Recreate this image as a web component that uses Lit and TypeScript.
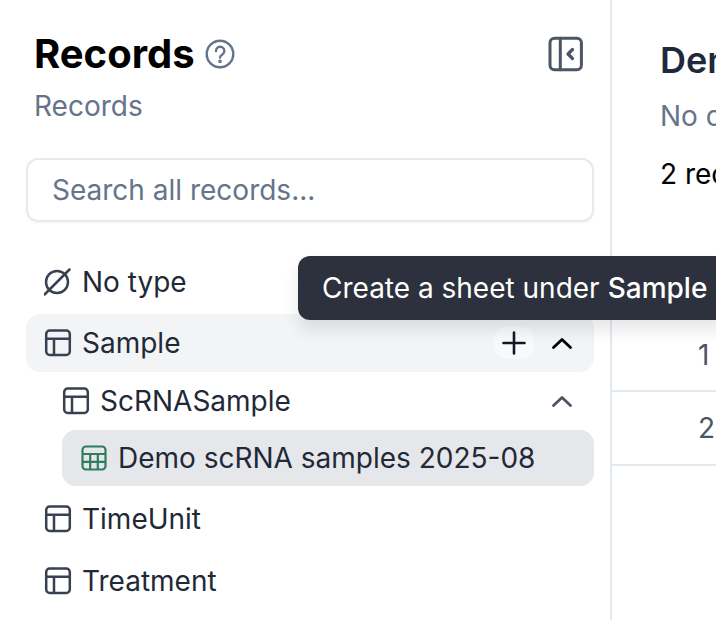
import { LitElement, html, css, svg } from "lit";
import { customElement } from "lit/decorators.js";

const tableIcon = svg`<svg class="ic" viewBox="0 0 28 28" fill="none" stroke="currentColor" stroke-width="2.5"><rect x="2.2" y="1.6" width="23.6" height="24.4" rx="3.5"/><path d="M2.2 9.8h23.6M10 9.8V26"/></svg>`;
const chevUp = (c: string) => svg`<svg class="chev ${c}" viewBox="0 0 24 24" fill="none" stroke="currentColor" stroke-width="2.8" stroke-linecap="round" stroke-linejoin="round"><path d="M3.5 16.5 12 8.5l8.5 8"/></svg>`;

@customElement("app-root")
export class AppRoot extends LitElement {
  static styles = css`
    :host { display: block; width: 716px; height: 620px; position: relative; overflow: hidden; background: #fff; font-family: Inter, "Liberation Sans", sans-serif; color: #1f2937; }
    .page { display: flex; height: 620px; }
    .side { width: 610px; flex: none; padding: 0 16px 0 26px; box-sizing: border-box; }
    .divider { width: 2px; flex: none; background: #e2e8f0; }
    .main { flex: 1; min-width: 0; overflow: hidden; white-space: nowrap; display: flex; flex-direction: column; }
    .head { display: flex; align-items: center; justify-content: space-between; padding: 32px 8px 0 8px; height: 44px; }
    .title { display: flex; align-items: center; gap: 10px; }
    h1 { margin: 0; font-size: 40px; line-height: 44px; font-weight: 700; color: #000; }
    .help { width: 30px; height: 30px; display: block; color: #64748b; }
    .collapse { width: 36px; height: 36px; display: block; color: #4b5563; margin-right: 2px; }
    .sub { margin: 14px 0 0 8px; font-size: 28px; line-height: 32px; color: #64748b; }
    .search { display: flex; align-items: center; height: 64px; box-sizing: border-box; margin-top: 36px; padding: 0 24px; border: 2px solid #e5e9f0; border-radius: 12px; box-shadow: 0 1px 2px rgba(15,23,42,.05); font-size: 28px; color: #64748b; }
    .tree { margin-top: 30px; display: flex; flex-direction: column; }
    .row { display: flex; align-items: center; gap: 10px; font-size: 28px; line-height: 36px; padding: 0 20px 0 18px; border-radius: 14px; }
    .ic { width: 28px; height: 28px; flex: none; color: #374151; }
    .label { flex: 1; white-space: nowrap; }
    .chev { width: 24px; height: 24px; flex: none; color: #4b5563; }
    .chev.dark { color: #000; }
    .none { height: 60px; margin-bottom: 2px; }
    .sample { height: 58px; background: #f3f4f6; }
    .plus { width: 40px; height: 32px; border-radius: 12px; background: #f8f9fb; display: flex; align-items: center; justify-content: center; margin-right: 6px; }
    .plus svg { width: 28px; height: 28px; color: #111827; }
    .nest { height: 58px; margin-left: 18px; }
    .sheet { height: 56px; margin-left: 36px; padding-left: 18px; background: #e5e7eb; }
    .sheet .ic { color: #2f7d5b; }
    .plain { height: 66px; }
    .plain.last { height: 58px; }
    .main h2 { margin: 38px 0 0 48px; font-size: 36px; line-height: 44px; font-weight: 600; color: #1e293b; }
    .desc { margin: 17px 0 0 48px; font-size: 28px; line-height: 34px; color: #64748b; }
    .count { margin: 25px 0 0 48px; font-size: 28px; line-height: 32px; color: #000; }
    .tbl { margin-top: 130px; }
    .tr { box-sizing: border-box; display: flex; align-items: center; padding-left: 86px; font-size: 28px; color: #4b5563; border-bottom: 2px solid #e2e8f0; }
    .tr.a { height: 72px; }
    .tr.b { height: 74px; }
    .tip { position: absolute; left: 298px; top: 256px; height: 64px; box-sizing: border-box; padding: 0 24px; display: flex; align-items: center; background: rgba(36,40,53,.96); color: #fff; border-radius: 12px; font-size: 28px; white-space: nowrap; box-shadow: 0 10px 16px rgba(15,23,42,.1); }
    .tip b { font-weight: 500; margin-left: 8px; }
  `;

  render() {
    return html`
      <div class="page">
        <aside class="side">
          <div class="head">
            <div class="title">
              <h1>Records</h1>
              <svg class="help" viewBox="0 0 30 30" fill="none" stroke="currentColor" stroke-width="2.4" stroke-linecap="round"><circle cx="15" cy="15" r="13.3"/><path d="M11 12a4.2 4.2 0 1 1 6.4 3.5c-1.4.9-2.4 1.6-2.4 3"/><circle cx="15" cy="22.3" r=".7" fill="currentColor"/></svg>
            </div>
            <svg class="collapse" viewBox="0 0 36 36" fill="none" stroke="currentColor" stroke-width="3" stroke-linecap="round" stroke-linejoin="round"><rect x="2" y="2.3" width="31.4" height="31.4" rx="4.5"/><path d="M12.3 2.3v31.4"/><path d="M24.5 13.5 20 18l4.5 4.5" stroke-width="3.2"/></svg>
          </div>
          <p class="sub">Records</p>
          <div class="search">Search all records...</div>
          <div class="tree">
            <div class="row none">
              <svg class="ic" viewBox="0 0 28 28" fill="none" stroke="currentColor" stroke-width="2.5" stroke-linecap="round"><circle cx="13" cy="14" r="11"/><path d="M.5 26.5 25.5 1.5"/></svg>
              <span class="label">No type</span>
            </div>
            <div class="row sample">
              ${tableIcon}<span class="label">Sample</span>
              <span class="plus"><svg viewBox="0 0 28 28" fill="none" stroke="currentColor" stroke-width="2.6" stroke-linecap="round"><path d="M14 3.5v21M3.5 14h21"/></svg></span>
              ${chevUp("dark")}
            </div>
            <div class="row nest">${tableIcon}<span class="label">ScRNASample</span>${chevUp("")}</div>
            <div class="row sheet">
              <svg class="ic" viewBox="0 0 28 28" fill="none" stroke="currentColor" stroke-width="2.2"><rect x="2.5" y="2.5" width="23" height="23" rx="3.5"/><path d="M2.5 10h23M2.5 17.8h23M10.2 10v15.5M17.8 10v15.5"/></svg>
              <span class="label">Demo scRNA samples 2025-08</span>
            </div>
            <div class="row plain">${tableIcon}<span class="label">TimeUnit</span></div>
            <div class="row plain last">${tableIcon}<span class="label">Treatment</span></div>
          </div>
        </aside>
        <div class="divider"></div>
        <main class="main">
          <h2>Demo scRNA samples 2025-08</h2>
          <p class="desc">No description</p>
          <div class="count">2 records</div>
          <div class="tbl">
            <div class="tr a">1</div>
            <div class="tr b">2</div>
          </div>
        </main>
      </div>
      <div class="tip">Create a sheet under <b>Sample</b></div>
    `;
  }
}
